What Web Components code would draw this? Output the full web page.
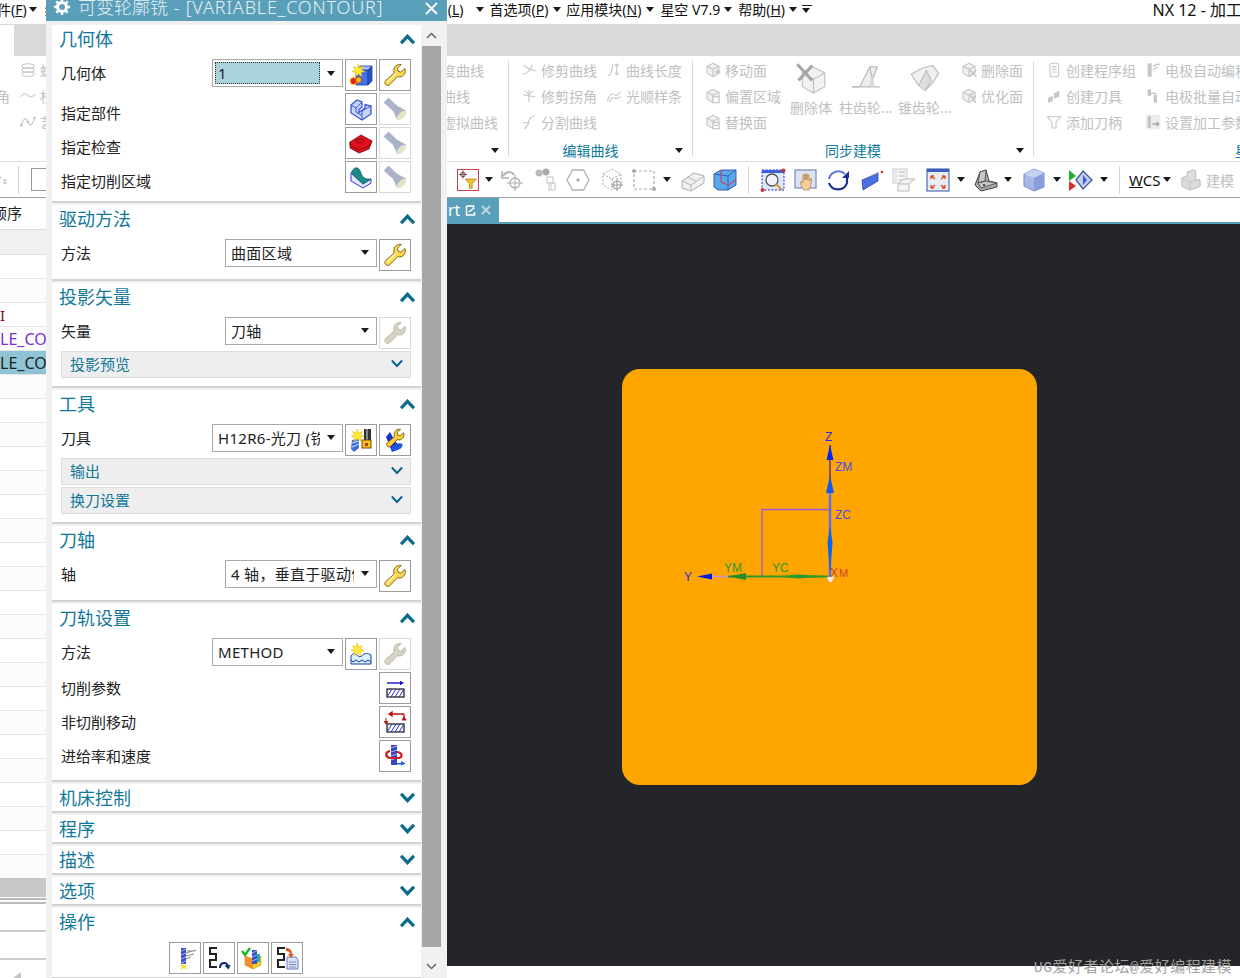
<!DOCTYPE html>
<html lang="zh">
<head>
<meta charset="utf-8">
<title>NX 12</title>
<style>
    html, body { margin: 0; height: 100%; background: #fff; overflow: hidden; }
    body { font-family: "Noto Sans", "Noto Sans CJK SC", sans-serif; font-size: 15px; color: #222; }
</style>
</head>
<body>
<nx-app>
    <nx-menubar></nx-menubar>
    <nx-tabband></nx-tabband>
    <nx-ribbon></nx-ribbon>
    <nx-toolbar></nx-toolbar>
    <nx-workspace>
        <nx-tree slot="left"></nx-tree>
        <nx-viewport slot="right"></nx-viewport>
    </nx-workspace>
    <nx-dialog slot="over" heading="可变轮廓铣" suffix=" - [VARIABLE_CONTOUR]">
        <nx-section heading="几何体">
            <nx-row label="几何体"><nx-combo value="1" focus></nx-combo><nx-btn icon="geomnew"></nx-btn><nx-btn icon="wrench"></nx-btn></nx-row>
            <nx-row label="指定部件" off="20"><nx-btn icon="part"></nx-btn><nx-btn icon="flash" disabled></nx-btn></nx-row>
            <nx-row label="指定检查" off="20"><nx-btn icon="check"></nx-btn><nx-btn icon="flash" disabled></nx-btn></nx-row>
            <nx-row label="指定切削区域" off="20"><nx-btn icon="area"></nx-btn><nx-btn icon="flash" disabled></nx-btn></nx-row>
        </nx-section>
        <nx-section heading="驱动方法">
            <nx-row label="方法"><nx-combo value="曲面区域" wide></nx-combo><nx-btn icon="wrench"></nx-btn></nx-row>
        </nx-section>
        <nx-section heading="投影矢量">
            <nx-row label="矢量"><nx-combo value="刀轴" wide></nx-combo><nx-btn icon="wrenchgray" disabled></nx-btn></nx-row>
            <nx-sub heading="投影预览"></nx-sub>
        </nx-section>
        <nx-section heading="工具">
            <nx-row label="刀具"><nx-combo value="H12R6-光刀 (铣刀-5 参数)"></nx-combo><nx-btn icon="toolnew"></nx-btn><nx-btn icon="tooledit"></nx-btn></nx-row>
            <nx-sub heading="输出"></nx-sub>
            <nx-sub heading="换刀设置"></nx-sub>
        </nx-section>
        <nx-section heading="刀轴">
            <nx-row label="轴"><nx-combo value="4 轴，垂直于驱动体" wide></nx-combo><nx-btn icon="wrench"></nx-btn></nx-row>
        </nx-section>
        <nx-section heading="刀轨设置">
            <nx-row label="方法"><nx-combo value="METHOD"></nx-combo><nx-btn icon="method"></nx-btn><nx-btn icon="wrenchgray" disabled></nx-btn></nx-row>
            <nx-row label="切削参数" off="16"><nx-btn icon="cut"></nx-btn></nx-row>
            <nx-row label="非切削移动" off="16"><nx-btn icon="noncut"></nx-btn></nx-row>
            <nx-row label="进给率和速度" off="16"><nx-btn icon="feeds"></nx-btn></nx-row>
        </nx-section>
        <nx-section heading="机床控制" collapsed></nx-section>
        <nx-section heading="程序" collapsed></nx-section>
        <nx-section heading="描述" collapsed></nx-section>
        <nx-section heading="选项" collapsed></nx-section>
        <nx-section heading="操作" tight>
            <nx-actions>
                <nx-btn icon="generate"></nx-btn><nx-btn icon="replay"></nx-btn><nx-btn icon="verify"></nx-btn><nx-btn icon="list"></nx-btn>
            </nx-actions>
        </nx-section>
    </nx-dialog>
</nx-app>

<script>
const G = '#c6c6c6';
const gline = `fill="none" stroke="${G}" stroke-width="1.6"`;
const grayCube = extra => `<path d="M12 2l9 4.5v10L12 22l-9-5.500v-10z" fill="#f0f0f0" stroke="${G}" stroke-width="1.6"/><path d="M3 6.500l9 4.500 9-4.500M12 11v11" ${gline}/>${extra}`;
const star = (cx, cy) => `<path d="M${cx} ${cy - 6}l1.500 4 4-1.500-2 3.500 3.500 1.500-4 1 1 4-3.500-2.500-3.500 2.500 1-4-4-1 3.500-1.500-2-3.500 4 1.500z" fill="#ffe93a" stroke="#e8c000" stroke-width=".6"/>`;
const wrenchPath = 'M22 5.500l-4.200 3.700-2.800-1-.6-3L18.300 1.500C14 .8 10.600 3.700 10.800 8c0 .8.200 1.500.4 2.100L3 17.200c-1.500 1.300-1.500 3.400-.3 4.400 1.200 1.200 3.200 1 4.500-.3l7.300-7.600c.7.200 1.300.3 2 .3 4.200 0 6.800-4.300 5.500-8.500z';
const hatch = y => `<rect x="4" y="${y}" width="17" height="8" fill="#fff" stroke="#111" stroke-width="1.200"/><path d="M4 ${y + 8}l5-8M8 ${y + 8}l5-8M12 ${y + 8}l5-8M16 ${y + 8}l5-8" stroke="#2a2ad0" stroke-width="1"/>`;
const sPath = '<path d="M10 2H3v6h6v6H3v7h7" fill="none" stroke="#222" stroke-width="2"/>';
const drill = (x, y, h) => `<rect x="${x}" y="${y}" width="5" height="${h}" fill="#3b4fc4"/><path d="M${x} ${y + 3}l5-2M${x} ${y + 7}l5-2M${x} ${y + 11}l5-2" stroke="#9fb0f0" stroke-width="1"/>`;

const ICONS = {
    // ribbon, disabled
    coil: `<g ${gline} stroke-width="2"><ellipse cx="12" cy="6" rx="9" ry="3.500"/><ellipse cx="12" cy="12" rx="9" ry="3.500"/><ellipse cx="12" cy="18" rx="9" ry="3.500"/></g>`,
    wave: `<path d="M1 13c4-6 8-5 11-2s7 3 11-2" ${gline} stroke-width="2"/>`,
    spline: `<path d="M2 17C5 5 10 5 12 12s6 6 10-6" ${gline} stroke-width="2"/><circle cx="2" cy="17" r="2" fill="${G}"/><circle cx="12" cy="12" r="2" fill="${G}"/><circle cx="22" cy="6" r="2" fill="${G}"/>`,
    trimc: `<path d="M2 18c8 0 12-5 15-14M4 4c5 6 11 9 19 9" ${gline} stroke-dasharray="none"/>`,
    trimk: `<path d="M12 3v18M3 10l18 3M6 4l6 6M18 4l-6 6" ${gline}/>`,
    splitc: `<path d="M5 22c7-3 5-9 8-14 1.500-3 4-5 7-5M3 13h10M11 16l-6 6" ${gline}/>`,
    clen: `<path d="M3 21c6-3 7-10 7-18M16 3v16M13 6l3-3 3 3M13 16l3 3 3-3" ${gline}/>`,
    smooth: `<path d="M2 20c2-8 6-13 10-10s7 0 10-4M5 21c3-6 6-8 9-6s5 0 8-2" ${gline}/>`,
    fmove: grayCube(`<path d="M15 15h8M19 11v8" stroke="${G}" stroke-width="2.400"/>`),
    foffs: grayCube(`<rect x="12" y="13" width="9" height="9" fill="#fff" stroke="${G}" stroke-width="1.800"/>`),
    frepl: grayCube(`<rect x="12" y="13" width="9" height="9" fill="#fff" stroke="${G}" stroke-width="1.800"/><path d="M14 17h5" stroke="${G}" stroke-width="2"/>`),
    fdel: grayCube(`<path d="M13 12l10 10M23 12L13 22" stroke="${G}" stroke-width="2.400"/>`),
    fopt: grayCube(`<path d="M14 11l8 11M22 12l-6 4" stroke="${G}" stroke-width="2.400"/>`),
    prog: `<rect x="6" y="2" width="13" height="20" rx="3" ${gline}/><path d="M9 7h7M9 11h7M9 15h7" stroke="${G}" stroke-width="1.800"/>`,
    tnew: `<path d="M3 15l7-3v8l-7 2zM12 8l8-4v9l-8 3z" fill="${G}"/>`,
    tadd: `<path d="M2 4h20l-7 8v9h-6v-9z" ${gline}/>`,
    eauto: `<rect x="4" y="2" width="6" height="20" fill="${G}"/><path d="M12 6l10-3M12 11l7-3" stroke="${G}" stroke-width="2"/>`,
    ebatch: `<rect x="4" y="2" width="5" height="10" fill="${G}"/><rect x="13" y="10" width="5" height="12" fill="${G}"/><path d="M9 8h8" stroke="${G}" stroke-width="2"/>`,
    eset: `<rect x="1" y="1" width="22" height="22" fill="#eee"/><rect x="4" y="3" width="5" height="18" fill="${G}"/><path d="M11 15h9M17 12l4 3-4 3" stroke="#aaa" stroke-width="2" fill="none"/>`,
    // ribbon, large
    delbody: `<path d="M13 3l10 5v11l-9 5-9-5V8z" fill="#f2f2f2" stroke="#c4c4c4"/><path d="M5 8l9 5 9-5M14 13v11" fill="none" stroke="#c4c4c4"/><path d="M1 1l12 13M13 2L2 14" stroke="#a8a8a8" stroke-width="2.600"/>`,
    cyl: `<path d="M1 19h6L15 3h6l-6 16H7" fill="#eee" stroke="#bbb"/><path d="M15 3l3 16h5M15 19h3M1 19h6" fill="none" stroke="#bbb"/><path d="M17 8l2 11h-4z" fill="#d8d8d8"/>`,
    cone: `<path d="M1 9l6 9 5 4 6-6 5-8-5-6-8 2z" fill="#f0f0f0" stroke="#c0c0c0"/><path d="M7 18l6-12 4 8-5 8" fill="#ddd" stroke="#c0c0c0"/>`,
    // dialog
    geomnew: `<path d="M7 7h12v15H7z" fill="#3f74e8" stroke="#1b3fa8" stroke-width=".8"/><path d="M7 7l4-4h12l-4 4z" fill="#a5c0f5" stroke="#1b3fa8" stroke-width=".8"/><path d="M19 7l4-4v15l-4 4z" fill="#2a55c0" stroke="#1b3fa8" stroke-width=".8"/>${star(9, 7)}<circle cx="4.500" cy="18" r="3.500" fill="#e8201c" stroke="#f6d21f"/><circle cx="9.500" cy="17" r="3" fill="#f0c020" stroke="#c03010" stroke-width=".7"/>`,
    wrench: `<path d="${wrenchPath}" fill="#fbd955" stroke="#8d6a12" stroke-width="1"/><path d="M4 19.500L13 10" stroke="#fff6b8" stroke-width="1.400"/>`,
    wrenchgray: `<path d="${wrenchPath}" fill="#d6d3c4" stroke="#bcb9aa" stroke-width="1"/>`,
    flash: `<path d="M1 5.500L5.500 1 14 9l9 5-8.500 9-4-9z" fill="#aab3c8" stroke="#a0a9be" stroke-width=".6"/><ellipse cx="18.500" cy="18.500" rx="6" ry="3" transform="rotate(-45 18.500 18.500)" fill="#e2e4c6"/>`,
    part: `<path d="M2 8L8 3l5 2v5l-3 2.500v3L16 11V7.500l6 1.500v8l-9 6-11-7z" fill="#c8d5fb" stroke="#3c55d8" stroke-width="1.300"/><path d="M2 8l5 3 6-6M7 11v4l6 3.500V14l9-5M13 18.500V23" fill="none" stroke="#3c55d8" stroke-width="1"/>`,
    check: `<path d="M1 11l11-7 11 6-3 8-10 4-9-5z" fill="#e0101c" stroke="#7a0408" stroke-width=".8"/><path d="M1 11v3l9 5 10-4 3-5" fill="none" stroke="#7a0408" stroke-width=".8"/><ellipse cx="11" cy="10" rx="4" ry="2" fill="none" stroke="#8a0a10" stroke-width="1"/>`,
    area: `<path d="M2 8v8l12 7 8-5v-4l-8 5z" fill="#e2e8fb" stroke="#3333ee" stroke-width="1"/><path d="M2 8c3-7 8-7 10 0 2 6 6 6 10 6l-8 5z" fill="#1d8a86" stroke="#0e5e5a" stroke-width=".6"/>`,
    toolnew: `<path d="M3 12l7-2v10l-5 4-3-3z" fill="#3d6fd8"/><path d="M3 15l7-2M3 19l7-3" stroke="#c4d4f8" stroke-width="1.200"/><rect x="15" y="1" width="7" height="12" fill="#333"/><rect x="17" y="1" width="2" height="12" fill="#888"/><rect x="13" y="12" width="9" height="8" fill="#f7c41e" stroke="#7a4a00"/><rect x="16" y="15" width="3" height="3" fill="#c03000"/>${star(8, 7)}`,
    tooledit: `<path d="M8 8l4-5 5 9 6 7-9 4-3-8z" fill="#1530d8" transform="translate(-5 1)"/><ellipse cx="14" cy="19" rx="6" ry="3" transform="rotate(-25 14 19)" fill="#1d55e0"/><path d="${wrenchPath}" fill="#fbce35" stroke="#6c5208" stroke-width="1" transform="translate(2 0) scale(.85)"/>`,
    method: `<path d="M2 14c2-3 4-3 6-1s4 2 6 0 5-2 8 0v9H2z" fill="#dfeefa" stroke="#0a3fa8" stroke-width="1"/><path d="M2 18l2 2 3-2 3 2 3-2 3 2 3-2 3 2" fill="none" stroke="#0a3fa8" stroke-width="1"/>${star(8, 7)}`,
    cut: `<path d="M4 7h15" stroke="#1010c8" stroke-width="1.400"/><path d="M21 7l-4-2.200v4.400z" fill="#1010c8"/>${hatch(13)}`,
    noncut: `<path d="M6 4h15M6 4l3-2v4zM21 4v6" stroke="#c01010" stroke-width="1.300" fill="#c01010"/><path d="M3 8v6M1 11l2 3 2-3M21 7l-2 3h4z" stroke="#c01010" fill="#c01010"/>${hatch(14)}`,
    feeds: `<rect x="8" y="1" width="6" height="20" fill="#3848b8"/><path d="M8 4l6-2M8 8l6-2M8 12l6-2M8 16l6-2" stroke="#9fb0f0"/><path d="M14 8c6 1 6 6 0 6H7C2 13 2 8 7 7" fill="none" stroke="#d01818" stroke-width="2.200"/><path d="M12 22h6v-2l5 2.500-5 2v-1h-6z" fill="#2a5fe0" transform="translate(0 -3)"/>`,
    generate: `<rect x="8" y="2" width="5" height="16" fill="#3b4fc4"/><path d="M8 5l5-2M8 9l5-2M8 13l5-2M8 17l5-2" stroke="#a6b4f0"/><path d="M13 7l10-3M13 10l8-2M13 13l5-2M14 5h8" stroke="#8e8e8e" stroke-width="1.200"/><path d="M10.500 17l1.200 2.500 3-.500-2 2 1.500 2.500-3.700-1.300-3.500 1.300 1.500-2.500-2-2 3 .500z" fill="#f4e040"/>`,
    replay: `${sPath}<path d="M13 22c0-6 7-7 8-1" fill="none" stroke="#0a2a6a" stroke-width="2"/><path d="M17.500 19.500l6-.5-2 4.500z" fill="#0a2a6a"/>`,
    verify: `<path d="M4 10l8 3 8-3v9l-8 4-8-4z" fill="#f7d21e" stroke="#c09800" stroke-width=".6"/><path d="M4 10l8 3v10l-8-4z" fill="#f09030"/>${drill(11, 4, 14)}<path d="M16 8h3v8h-3z" fill="#22a8b0"/><path d="M1 5l3 4 5-7" fill="none" stroke="#12b81c" stroke-width="2.400"/>`,
    list: `${sPath}<path d="M12 11h9l2 3v9H12z" fill="#d9e3f8" stroke="#6a7ac8"/><path d="M14 16h7M14 18.500h7M14 21h7" stroke="#7a88c0"/><path d="M11 2c4 0 6 2 6 6h2l-3 4-3-4h2c0-2-2-3-4-3z" fill="#e05a20"/>`,
    // toolbar
    filter: `<rect x=".5" y=".5" width="23" height="23" fill="#fff" stroke="#c8323c" stroke-width="1"/><path d="M9 11h12l-4.500 5v5h-3v-5z" fill="#f4c233" stroke="#a87a10" stroke-width=".8"/><circle cx="6.500" cy="6" r="2.500" fill="none" stroke="#a01818"/><path d="M6.500 1.500v9M2 6h9" stroke="#333" stroke-width=".8"/>`,
    undot: `<path d="M3 8c3-5 9-5 11-1" fill="none" stroke="#b0b0b0" stroke-width="1.800"/><path d="M2 3v7h7" fill="none" stroke="#b0b0b0" stroke-width="1.600"/><circle cx="15" cy="15" r="5" fill="none" stroke="#b0b0b0" stroke-width="1.300"/><path d="M15 7v16M7 15h16" stroke="#b0b0b0" stroke-width="1.100"/>`,
    binoc: `<circle cx="5" cy="5" r="3.500" fill="#bbb"/><circle cx="12" cy="4" r="3.500" fill="#aaa"/><rect x="13" y="9" width="6" height="6" fill="none" stroke="#ccc" stroke-width="1.200"/><rect x="15" y="15" width="6" height="7" fill="none" stroke="#ccc" stroke-width="1.200"/><path d="M17 15v7" stroke="#ccc"/>`,
    hexa: `<path d="M6.500 2h11L23 12l-5.500 10h-11L1 12z" fill="none" stroke="#b0b0b0" stroke-width="1.300"/><circle cx="12" cy="12" r="1.500" fill="#999"/>`,
    dcube: `<path d="M12 1l9 5v11l-9 5-9-5V6zM3 6l9 5 9-5M12 11v11" fill="none" stroke="#aaa" stroke-dasharray="2 1.500"/><circle cx="17" cy="17" r="4" fill="#fff" stroke="#999"/><path d="M17 10v13M11 17h12" stroke="#999"/>`,
    rsel: `<rect x="2" y="3" width="20" height="18" fill="none" stroke="#aaa" stroke-dasharray="3 2" stroke-width="1.200"/><circle cx="2" cy="3" r="2" fill="#aaa"/><circle cx="22" cy="21" r="2" fill="#aaa"/>`,
    scube: `<path d="M1 13l12-8 10 3v7l-13 8-9-3z" fill="#f0f0f0" stroke="#aaa"/><path d="M1 13l9 4 13-9M10 17v6M6 9l9 4" fill="none" stroke="#b8b8b8"/>`,
    bcube: `<path d="M1 6l7-4h15v15l-8 5H5l-4-3z" fill="#58a8e8" stroke="#3a5cb0"/><path d="M1 6l14 2v14M15 8l8-6" fill="none" stroke="#2f60b8"/><path d="M8 2v12l7 3 8-5" fill="none" stroke="#d83050" stroke-width="1"/>`,
    zoomw: `<rect x="1" y="2" width="22" height="20" fill="#dfe8f6" stroke="#2222dd" stroke-dasharray="2 1.500"/><rect x="1" y="2" width="22" height="3" fill="#3a60d8"/><circle cx="11" cy="12" r="6" fill="#eef2f6" stroke="#555" stroke-width="1.300"/><path d="M15 16l6 6" stroke="#c8a040" stroke-width="2.400"/><circle cx="1.500" cy="22" r="2" fill="#d03030"/><circle cx="22.500" cy="2.500" r="2" fill="#d03030"/>`,
    pan: `<rect x="1" y="2" width="21" height="18" fill="#dbe3f0" stroke="#7a8ab8" stroke-width="1.200"/><path d="M10 22c-3-3-4-7-3-9l2 2V7h2v5V6h2v6V7h2v6l2-3c1 1 0 8-2 12z" fill="#f4ce9c" stroke="#a87840" stroke-width=".7"/>`,
    rotate: `<path d="M19 6A9.500 9.500 0 0 0 3 11" fill="none" stroke="#6478d8" stroke-width="2"/><path d="M3 15a9.500 9.500 0 0 0 18 0V10" fill="none" stroke="#1a2f90" stroke-width="2.200"/><path d="M23 3v7h-7z" fill="#1a2f90"/>`,
    prism: `<path d="M2 12l16-7v8L3 22z" fill="#4a6fe0" stroke="#20389a" stroke-width=".7"/><path d="M2 12l4-2 14-7-2 2z" fill="#a0b8f0"/><circle cx="22" cy="4" r="1.300" fill="#d02828"/>`,
    vlist: `<rect x="1" y="1" width="14" height="14" fill="#f4f4f4" stroke="#c8c8c8"/><path d="M3 4h2M7 4h6M3 8h2M7 8h6M3 12h2M7 12h6" stroke="#b8b8b8" stroke-width="1.200"/><path d="M6 16l6-5h11l-6 5v7H6zM17 16H6" fill="#f4f4f4" stroke="#bbb"/>`,
    fit: `<rect x="1" y="1" width="22" height="22" fill="#e4edf2" stroke="#3a4fa8" stroke-width="1"/><rect x="1" y="1" width="22" height="3" fill="#3a5cc0"/><path d="M5 8l4 3M5 8v3M5 8h3M19 8l-4 3M19 8v3M19 8h-3M5 20l4-3M5 20v-3M5 20h3M19 20l-4-3M19 20v-3M19 20h-3" stroke="#e8482c" stroke-width="1.400" fill="none"/>`,
    sheet: `<path d="M1 17l5-13 6-2 3 11 8 2v4L7 23z" fill="#a8a8a8" stroke="#444" stroke-width="1"/><path d="M6 4l6-2-1 11-7 2zM4 15l7-2 12 2-16 5z" fill="#c8c8c8" stroke="#444" stroke-width=".8"/><circle cx="10" cy="17" r="1" fill="#222"/>`,
    vcube: `<path d="M2 6l10-5 10 4v14l-10 4-10-5z" fill="#a7b5e8" stroke="#7a8ac4"/><path d="M2 6l10 4 10-5-10-4z" fill="#c5d0f2"/><path d="M12 10v13l10-4V5z" fill="#8c9ddc"/>`,
    sim: `<path d="M1 2l7 6-7 5z" fill="#22b030"/><path d="M1 13l7 5-7 5z" fill="#d83030"/><path d="M15 3l9 9-9 9-7-9z" fill="#c4cee8" stroke="#4a5aa8" stroke-width="1.400"/><path d="M15 7l4 5-4 5z" fill="#3a5ad8"/>`,
    solid: `<path d="M2 10l6-3V3l6-2 3 1v9l5 2v6l-11 4-9-4z" fill="#dcdcdc" stroke="#bbb"/><path d="M2 10l9 4 11-3M11 14v9" fill="none" stroke="#c4c4c4"/>`,
    small: `<rect x="3" y="4" width="5" height="5" fill="${G}"/><rect x="13" y="10" width="7" height="5" fill="${G}"/><rect x="13" y="17" width="7" height="5" fill="${G}"/>`
};

class NxIcon extends HTMLElement {
    connectedCallback() {
        const size = this.getAttribute('size') || 24;
        this.attachShadow({ mode: 'open' }).innerHTML = `
            <style>
                :host { display: block; flex: none; width: ${size}px; height: ${size}px; }
                svg { display: block; width: 100%; height: 100%; overflow: visible; }
            </style>
            <svg viewBox="0 0 24 24">${ICONS[this.getAttribute('name')] || ''}</svg>`;
    }
}

class NxArrow extends HTMLElement {
    connectedCallback() {
        this.attachShadow({ mode: 'open' }).innerHTML = `
            <style>
                :host { display: block; flex: none; width: 10px; height: 5px; }
                div { width: 0; height: 0; margin: 0 .5px; border: 4.500px solid transparent; border-top: 5px solid #1a1a1a; border-bottom: 0; }
            </style><div></div>`;
    }
}

class NxApp extends HTMLElement {
    connectedCallback() {
        this.attachShadow({ mode: 'open' }).innerHTML = `
            <style>
                :host { display: flex; flex-direction: column; position: relative; width: 1240px; height: 978px; overflow: hidden; }
            </style>
            <slot></slot><slot name="over"></slot>`;
    }
}

class NxMenubar extends HTMLElement {
    connectedCallback() {
        const item = (html, ml) => `<span class="m" style="margin-left:${ml}px">${html}</span>`;
        this.attachShadow({ mode: 'open' }).innerHTML = `
            <style>
                :host { display: flex; align-items: center; height: 24px; flex: none; background: #fff; font-size: 14px; color: #111; padding-bottom: 6px; box-sizing: border-box; overflow: hidden; white-space: nowrap; }
                .m { flex: none; }
                nx-arrow { margin-left: 4px; }
                .hid { flex: none; width: 403px; margin-left: 6px; overflow: hidden; }
                .lines { width: 10px; margin-left: 3px; border-top: 1px solid #222; padding-top: 2px; flex: none; }
                .title { margin-left: auto; font-size: 16px; margin-right: -2px; }
            </style>
            ${item('件(<u>F</u>)', -3)}<nx-arrow style="margin-left:2px"></nx-arrow>
            <span class="hid">编辑(E)</span>
            ${item('(<u>L</u>)', 0)}<nx-arrow style="margin-left:12px"></nx-arrow>
            ${item('首选项(<u>P</u>)', 4)}<nx-arrow></nx-arrow>
            ${item('应用模块(<u>N</u>)', 4)}<nx-arrow></nx-arrow>
            ${item('星空 V7.9', 5)}<nx-arrow style="margin-left:3px"></nx-arrow>
            ${item('帮助(<u>H</u>)', 5)}<nx-arrow></nx-arrow>
            <div class="lines"><nx-arrow style="margin:0"></nx-arrow></div>
            <span class="title">NX 12 - 加工</span>`;
    }
}

class NxTabband extends HTMLElement {
    connectedCallback() {
        this.attachShadow({ mode: 'open' }).innerHTML = `
            <style>
                :host { display: block; height: 32px; flex: none; background: #d9d9d9; box-sizing: border-box; padding-top: 1px; }
                div { width: 14px; height: 31px; background: #fff; }
            </style><div></div>`;
    }
}

class NxRibbon extends HTMLElement {
    connectedCallback() {
        const it = (icon, text) => `<div class="it">${icon ? `<nx-icon name="${icon}" size="16"></nx-icon>` : ''}<span>${text}</span></div>`;
        const big = (icon, text, w, s) => `<div class="big" style="width:${w}px"><nx-icon name="${icon}" size="${s}"></nx-icon><span>${text}</span></div>`;
        this.attachShadow({ mode: 'open' }).innerHTML = `
            <style>
                :host { display: flex; height: 106px; flex: none; background: #fff; border-bottom: 1px solid #dcdcdc; box-sizing: border-box; font-size: 14px; color: #c0c0c0; overflow: hidden; white-space: nowrap; }
                .grp { position: relative; flex: none; box-sizing: border-box; display: flex; padding-top: 1px; height: 105px; }
                .grp::after { content: ""; position: absolute; right: 0; top: 5px; bottom: 5px; width: 1px; background: #d8d8d8; }
                .col { display: flex; flex-direction: column; flex: none; }
                .it { display: flex; align-items: center; gap: 4px; height: 26px; }
                .big { display: flex; flex-direction: column; align-items: center; flex: none; padding-top: 6px; gap: 4px; }
                .big span { height: 21px; line-height: 21px; }
                .lbl { position: absolute; left: 0; right: 21px; bottom: 0; height: 20px; line-height: 20px; text-align: center; color: #0f7a9c; }
                nx-arrow { position: absolute; right: 9px; bottom: 8px; }
            </style>
            <div class="grp" style="width:509px">
                <div class="col" style="margin-left:-4px;width:24px"><div class="it"></div>${it('', '角')}</div>
                <div class="col" style="width:422px">${it('coil', '螺旋线')}${it('wave', '桥接曲线')}${it('spline', '艺术样条')}</div>
                <div class="col">${it('', '度曲线')}${it('', '曲线')}${it('', '虚拟曲线')}</div>
                <nx-arrow></nx-arrow>
            </div>
            <div class="grp" style="width:184px;padding-left:12px">
                <div class="col" style="width:85px">${it('trimc', '修剪曲线')}${it('trimk', '修剪拐角')}${it('splitc', '分割曲线')}</div>
                <div class="col">${it('clen', '曲线长度')}${it('smooth', '光顺样条')}</div>
                <div class="lbl">编辑曲线</div><nx-arrow></nx-arrow>
            </div>
            <div class="grp" style="width:341px;padding-left:12px">
                <div class="col" style="width:85px">${it('fmove', '移动面')}${it('foffs', '偏置区域')}${it('frepl', '替换面')}</div>
                ${big('delbody', '删除体', 42, 30)}
                <div style="width:8px"></div>${big('cyl', '柱齿轮...', 51, 30)}
                <div style="width:8px"></div>${big('cone', '锥齿轮...', 51, 30)}
                <div class="col" style="margin-left:11px">${it('fdel', '删除面')}${it('fopt', '优化面')}</div>
                <div class="lbl">同步建模</div><nx-arrow></nx-arrow>
            </div>
            <div class="grp" style="flex:1;padding-left:12px">
                <div class="col" style="width:99px">${it('prog', '创建程序组')}${it('tnew', '创建刀具')}${it('tadd', '添加刀柄')}</div>
                <div class="col">${it('eauto', '电极自动编程')}${it('ebatch', '电极批量自动')}${it('eset', '设置加工参数')}</div>
                <div class="lbl" style="left:201px;text-align:left;right:auto">星空</div>
            </div>`;
    }
}

class NxToolbar extends HTMLElement {
    connectedCallback() {
        const ic = (name, ml, size = 24) => `<nx-icon name="${name}" size="${size}" style="margin-left:${ml}px"></nx-icon>`;
        const ar = ml => `<nx-arrow style="margin-left:${ml}px"></nx-arrow>`;
        const dv = ml => `<div class="dv" style="margin-left:${ml}px"></div>`;
        this.attachShadow({ mode: 'open' }).innerHTML = `
            <style>
                :host { display: flex; align-items: center; height: 36px; flex: none; background: #fff; border-bottom: 1px solid #a0a0a0; box-sizing: border-box; overflow: hidden; white-space: nowrap; font-size: 14px; }
                .dv { width: 1px; height: 28px; background: #d4d4d4; flex: none; }
                .box { width: 22px; height: 23px; margin-left: 12px; flex: none; border: 1px solid #999; box-sizing: border-box; }
                .wcs { width: 31px; flex: none; margin-left: 9px; color: #111; font-size: 15px; }
                .mod { margin-left: 4px; color: #c0c0c0; }
            </style>
            <nx-icon name="small" size="10" style="margin-left:-2px"></nx-icon>
            ${dv(10)}<div class="box"></div>
            ${ic('filter', 404, 22)}${ar(5)}${ic('undot', 6)}${ic('binoc', 10)}${ic('hexa', 8)}${ic('dcube', 10)}${ic('rsel', 8)}${ar(6)}
            ${ic('scube', 9)}${ic('bcube', 8)}${dv(11)}${ic('zoomw', 12)}${ic('pan', 9)}${ic('rotate', 8)}${ic('prism', 10)}
            ${ic('vlist', 8)}${ic('fit', 10)}${ar(6)}${ic('sheet', 8)}${ar(5)}${ic('vcube', 9)}${ar(6)}${ic('sim', 6)}${ar(7)}
            ${dv(10)}<span class="wcs"><u>W</u>CS</span>${ar(2)}${ic('solid', 8, 22)}<span class="mod">建模</span>`;
    }
}

class NxWorkspace extends HTMLElement {
    connectedCallback() {
        this.attachShadow({ mode: 'open' }).innerHTML = `
            <style>
                :host { display: flex; flex: 1; min-height: 0; }
            </style>
            <slot name="left"></slot><slot name="right"></slot>`;
    }
}

class NxTree extends HTMLElement {
    connectedCallback() {
        let rows = '';
        for (let i = 0; i < 26; i++) {
            let cls = 'r', text = '';
            if (i === 2) { cls += ' dark'; text = 'I'; }
            if (i === 3) { cls += ' pur'; text = 'LE_CON'; }
            if (i === 4) { cls += ' sel'; text = 'LE_CON'; }
            rows += `<div class="${cls}">${text}</div>`;
        }
        this.attachShadow({ mode: 'open' }).innerHTML = `
            <style>
                :host { display: block; width: 447px; flex: none; background: #fff; overflow: hidden; font-size: 15px; white-space: nowrap; }
                .h { height: 32px; line-height: 31px; margin-left: -8px; box-sizing: border-box; border-bottom: 1px solid #ddd; }
                .g { height: 25px; background: #f0f0f0; border-bottom: 1px solid #ddd; box-sizing: border-box; }
                .r { height: 24px; line-height: 25px; box-sizing: border-box; border-bottom: 1px solid #e6e6e6; }
                .r:nth-child(even) { background: #fcfcfc; }
                .pur, .sel { font-size: 16px; }
                .dark { color: #7a1010; }
                .pur { color: #7a30d0; }
                .sel { background: #8ec4d4 !important; color: #222; }
                .bar { height: 19px; margin-top: -1px; background: #c8c8c8; }
                .dbl { height: 6px; margin-top: 1px; border-top: 2px solid #bbb; border-bottom: 2px solid #bbb; box-sizing: border-box; }
                .b { height: 28px; border-bottom: 2px solid #ccc; box-sizing: border-box; }
                svg { display: block; margin: 12px 0 0 13px; }
            </style>
            <div class="h">顺序</div><div class="g"></div>
            <div>${rows}</div>
            <div class="bar"></div><div class="dbl"></div><div class="b"></div><div class="b"></div>
            <svg width="8" height="6" viewBox="0 0 8 6"><path d="M0 6L8 0v6z" fill="#c4c4c4"/></svg>`;
    }
}

class NxViewport extends HTMLElement {
    connectedCallback() {
        this.attachShadow({ mode: 'open' }).innerHTML = `
            <style>
                :host { display: flex; flex-direction: column; flex: 1; min-width: 0; position: relative; }
                .tabs { height: 24px; flex: none; background: #fff; }
                .tab { display: flex; align-items: center; gap: 5px; width: 52px; height: 24px; box-sizing: border-box; background: #5a9fb9; color: #fff; font-size: 16px; padding-left: 1px; }
                .tab svg { flex: none; }
                .line { height: 2px; background: #5a9fb9; flex: none; }
                .view { height: 742px; flex: none; background: #232529; box-sizing: border-box; padding: 145px 0 0 175px; }
                .foot { flex: 1; background: #fff; }
                .mark { position: absolute; right: 8px; bottom: 1px; font-family: "Liberation Mono", "Noto Sans CJK SC", monospace; font-size: 15px; letter-spacing: .45px; color: #a2a2a2; white-space: nowrap; }
            </style>
            <div class="tabs"><div class="tab"><span>rt</span>
                <svg width="11" height="11" viewBox="0 0 11 11"><path d="M1.500 1h7v3M9.500 7v3h-8V1" fill="none" stroke="#fff" stroke-width="1.500"/><path d="M4 7l5-4" stroke="#fff" stroke-width="1.500"/></svg>
                <svg width="10" height="10" viewBox="0 0 10 10"><path d="M1 1l8 8M9 1l-8 8" stroke="#c4d4dc" stroke-width="2"/></svg>
            </div></div>
            <div class="line"></div>
            <div class="view"><nx-part></nx-part></div>
            <div class="foot"></div>
            <div class="mark">UG爱好者论坛@爱好编程建模</div>`;
    }
}

class NxPart extends HTMLElement {
    connectedCallback() {
        this.attachShadow({ mode: 'open' }).innerHTML = `
            <style>
                :host { display: block; width: 415px; height: 416px; background: #ffa500; border-radius: 18px; }
                svg { display: block; width: 100%; height: 100%; }
                text { font-family: "Liberation Sans", sans-serif; font-size: 12px; }
            </style>
            <svg viewBox="622 369 415 416">
                <path d="M762 577V509.500H830" fill="none" stroke="#9a58d8" stroke-width="1.300"/>
                <path d="M830 580V445" stroke="#0000e0" stroke-width="1"/>
                <path d="M830 577V493" stroke="#5870e8" stroke-width="2.400"/>
                <path d="M830 445l-3.500 15h7z" fill="#0028f0"/>
                <path d="M830 476l-4 17h8z" fill="#1058f0"/>
                <path d="M830 525l-2.500 18 2.500 30 2.500-30z" fill="#0a64f0"/>
                <path d="M712 576.500H730" stroke="#c890d0" stroke-width="1.500"/>
                <path d="M697 576.500l15-3v6z" fill="#0018f0"/>
                <path d="M728 576.500H828" stroke="#2d9a2d" stroke-width="2"/>
                <path d="M728 576.500l18-3.500v7z" fill="#2a8a2a"/>
                <path d="M778 576.500l20-2 30 2-30 2z" fill="#2a9a30"/>
                <path d="M830 577l2-2 1 2 2 1-2 1-1 3h-3l-1-3-2-1 3-1z" fill="#e8e8f0"/>
                <text x="825" y="441" fill="#2a2ae8">Z</text>
                <text x="835" y="471" fill="#4a4ae8">ZM</text>
                <text x="835" y="519" fill="#4a4ae8">ZC</text>
                <text x="684" y="581" fill="#2a2ae8">Y</text>
                <text x="724" y="572" fill="#2a9a3a">YM</text>
                <text x="772" y="572" fill="#2a9a3a">YC</text>
                <text x="830" y="577" fill="#d84030">X</text>
                <text x="839" y="577" fill="#d84030" style="font-size:11px">M</text>
            </svg>`;
    }
}

class NxDialog extends HTMLElement {
    connectedCallback() {
        this.attachShadow({ mode: 'open' }).innerHTML = `
            <style>
                :host { position: absolute; left: 46px; top: 0; width: 401px; height: 978px; display: flex; flex-direction: column; background: #f1f1f1; overflow: hidden; }
                .cap { display: flex; align-items: center; height: 21px; flex: none; background: #5a9fb9; color: #e4f0f4; font-size: 18px; font-weight: 300; overflow: hidden; white-space: pre; position: relative; }
                .cap .gear { margin-left: 8px; flex: none; margin-top: -7px; }
                .cap .t { margin-left: 8px; margin-top: -8px; line-height: 20px; }
                .cap .s { letter-spacing: .85px; }
                .cap .x { position: absolute; right: 9px; top: 2px; }
                .body { display: flex; flex: 1; min-height: 0; padding-left: 6px; }
                .main { width: 369px; flex: none; padding-top: 4px; }
                .sb { width: 19px; flex: none; margin-left: 1px; display: flex; flex-direction: column; padding-top: 4px; }
                .sb .a { height: 21px; flex: none; display: flex; align-items: center; justify-content: center; }
                .sb .t2 { height: 901px; flex: none; background: #a6a6a6; }
                .sb .a2 { height: 38px; padding-top: 0; }
            </style>
            <div class="cap">
                <svg class="gear" width="16" height="16" viewBox="0 0 16 16"><circle cx="8" cy="8" r="4.500" fill="none" stroke="#fff" stroke-width="3"/><path d="M8 0v3M8 13v3M0 8h3M13 8h3M2.300 2.300l2 2M11.700 11.700l2 2M13.700 2.300l-2 2M4.300 11.700l-2 2" stroke="#fff" stroke-width="2.400"/></svg>
                <span class="t">${this.getAttribute('heading')}<span class="s">${this.getAttribute('suffix')}</span></span>
                <svg class="x" width="13" height="13" viewBox="0 0 13 13"><path d="M1 1l11 11M12 1L1 12" stroke="#fff" stroke-width="1.800"/></svg>
            </div>
            <div class="body">
                <div class="main"><slot></slot></div>
                <div class="sb">
                    <div class="a"><svg width="11" height="7" viewBox="0 0 11 7"><path d="M1 6l4.500-4.500L10 6" fill="none" stroke="#666" stroke-width="1.500"/></svg></div>
                    <div class="t2"></div>
                    <div class="a a2"><svg width="11" height="7" viewBox="0 0 11 7"><path d="M1 1l4.500 4.500L10 1" fill="none" stroke="#666" stroke-width="1.500"/></svg></div>
                </div>
            </div>`;
    }
}

const chevron = (down, w, h, sw) => `<svg width="${w}" height="${h}" viewBox="0 0 14 10"><path d="${down ? 'M1 1.500L7 8l6-6.500' : 'M1 8.500L7 2l6 6.500'}" fill="none" stroke="#0a6a88" stroke-width="${sw}"/></svg>`;

class NxSection extends HTMLElement {
    connectedCallback() {
        const down = this.hasAttribute('collapsed');
        this.attachShadow({ mode: 'open' }).innerHTML = `
            <style>
                :host { display: block; background: #fff; border-bottom: 2px solid #d2d2d2; margin-bottom: 2px; }
                :host([collapsed]) .body { display: none; }
                :host([collapsed]) .head { height: 27px; }
                .head { display: flex; align-items: center; justify-content: space-between; height: 28px; padding: 0 6px 0 7px; font-size: 18px; color: #12789a; }
                .head span { margin-top: -2px; }
                svg { display: block; }
                .body { display: flex; flex-direction: column; gap: 2px; padding: 6px 10px 8px 9px; }
                :host([tight]) .body { padding-bottom: 3px; }
            </style>
            <div class="head"><span>${this.getAttribute('heading')}</span>${chevron(down, 15, 11, 3)}</div>
            <div class="body"><slot></slot></div>`;
    }
}

class NxRow extends HTMLElement {
    connectedCallback() {
        const off = +(this.getAttribute('off') || 14);
        this.attachShadow({ mode: 'open' }).innerHTML = `
            <style>
                :host { display: flex; align-items: flex-start; gap: 2px; min-height: 32px; }
                .l { flex: 1; line-height: 20px; height: 20px; margin-top: ${off - 10}px; white-space: nowrap; }
            </style>
            <div class="l">${this.getAttribute('label')}</div><slot></slot>`;
    }
}

class NxCombo extends HTMLElement {
    connectedCallback() {
        this.attachShadow({ mode: 'open' }).innerHTML = `
            <style>
                :host { display: flex; align-items: center; flex: none; box-sizing: border-box; width: 131px; height: 28px; background: #fff; border: 1px solid #a8a8a8; padding-left: 5px; padding-bottom: 1px; letter-spacing: .3px; }
                :host([wide]) { width: 152px; }
                .v { flex: 1; min-width: 0; overflow: hidden; white-space: nowrap; margin-right: 6px; }
                :host([focus]) { padding-left: 2px; padding-bottom: 0; }
                :host([focus]) .v { background: #abd3de; outline: 1px dotted #333; outline-offset: -1px; padding-left: 3px; height: 22px; line-height: 22px; }
                nx-arrow { margin-right: 6px; }
            </style>
            <div class="v">${this.getAttribute('value')}</div><nx-arrow></nx-arrow>`;
    }
}

class NxBtn extends HTMLElement {
    connectedCallback() {
        this.attachShadow({ mode: 'open' }).innerHTML = `
            <style>
                :host { display: flex; align-items: center; justify-content: center; flex: none; box-sizing: border-box; width: 32px; height: 32px; background: #fff; border: 1px solid #9c9c9c; }
                :host([disabled]) { border-color: #dadada; }
            </style>
            <nx-icon name="${this.getAttribute('icon')}"></nx-icon>`;
    }
}

class NxSub extends HTMLElement {
    connectedCallback() {
        this.attachShadow({ mode: 'open' }).innerHTML = `
            <style>
                :host { display: flex; align-items: center; justify-content: space-between; box-sizing: border-box; height: 27px; background: #eee; border: 1px solid #ddd; padding: 0 7px 2px 8px; color: #12789a; }
                svg { display: block; }
            </style>
            <span>${this.getAttribute('heading')}</span>${chevron(true, 12, 9, 2.4)}`;
    }
}

class NxActions extends HTMLElement {
    connectedCallback() {
        this.attachShadow({ mode: 'open' }).innerHTML = `
            <style>
                :host { display: flex; gap: 2px; padding-left: 108px; }
            </style>
            <slot></slot>`;
    }
}

// icons and arrows first, the others use them in their shadow roots
customElements.define('nx-icon', NxIcon);
customElements.define('nx-arrow', NxArrow);
customElements.define('nx-app', NxApp);
customElements.define('nx-menubar', NxMenubar);
customElements.define('nx-tabband', NxTabband);
customElements.define('nx-ribbon', NxRibbon);
customElements.define('nx-toolbar', NxToolbar);
customElements.define('nx-workspace', NxWorkspace);
customElements.define('nx-tree', NxTree);
customElements.define('nx-part', NxPart);
customElements.define('nx-viewport', NxViewport);
customElements.define('nx-dialog', NxDialog);
customElements.define('nx-section', NxSection);
customElements.define('nx-row', NxRow);
customElements.define('nx-combo', NxCombo);
customElements.define('nx-btn', NxBtn);
customElements.define('nx-sub', NxSub);
customElements.define('nx-actions', NxActions);
</script>
</body>
</html>
